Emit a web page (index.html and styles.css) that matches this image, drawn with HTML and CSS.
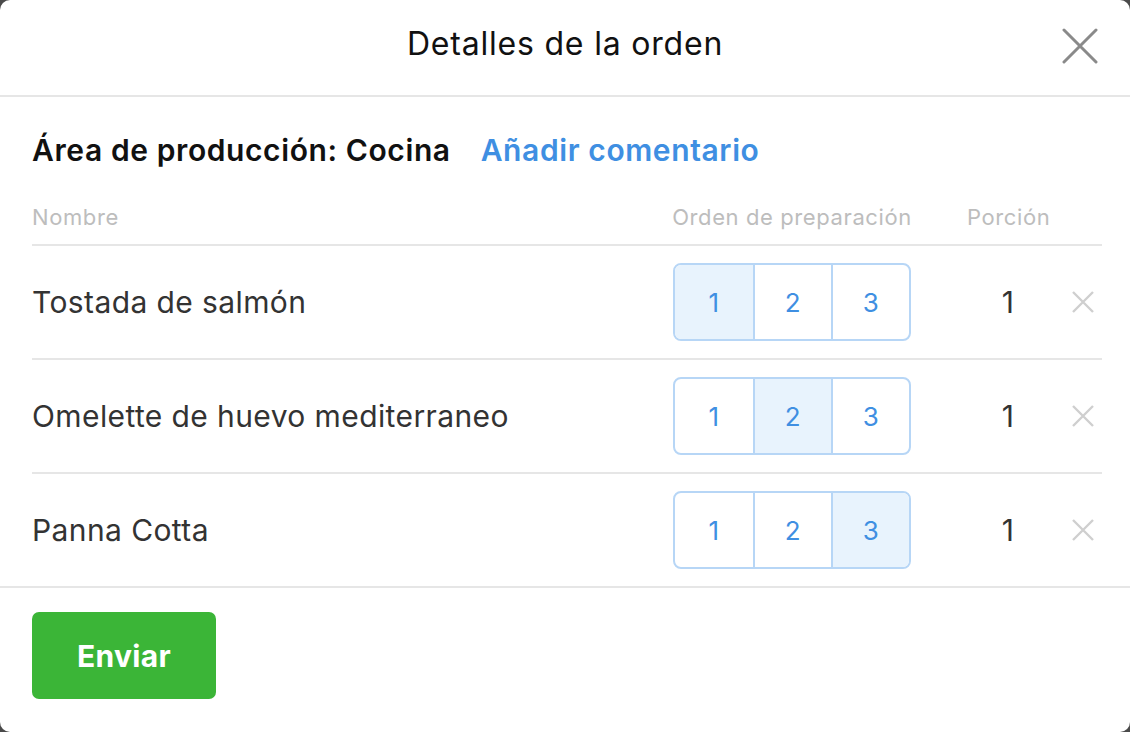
FILE: index.html
```html
<!DOCTYPE html>
<html lang="es">
<head>
<meta charset="utf-8">
<title>Detalles de la orden</title>
<link rel="stylesheet" href="styles.css">
</head>
<body>
<div class="modal">
  <header class="modal-header">
    <h1 class="modal-title">Detalles de la orden</h1>
    <button class="close-btn" aria-label="Cerrar">
      <svg width="36" height="36" viewBox="0 0 36 36"><path d="M2 2 L34 34 M34 2 L2 34" stroke="#8a8a8a" stroke-width="3" stroke-linecap="round"/></svg>
    </button>
  </header>
  <main class="modal-body">
    <div class="section-title">
      <span class="area">Área de producción: Cocina</span>
      <a class="comment-link" href="#">Añadir comentario</a>
    </div>
    <div class="table">
      <div class="row head">
        <div class="c-name">Nombre</div>
        <div class="c-order">Orden de preparación</div>
        <div class="c-portion">Porción</div>
        <div class="c-action"></div>
      </div>
      <div class="row item">
        <div class="c-name">Tostada de salmón</div>
        <div class="c-order"><div class="seg"><span class="on">1</span><span>2</span><span>3</span></div></div>
        <div class="c-portion">1</div>
        <div class="c-action"><svg class="del" width="22" height="22" viewBox="0 0 22 22"><path d="M1 1 L21 21 M21 1 L1 21" stroke="#cfcfcf" stroke-width="2.4"/></svg></div>
      </div>
      <div class="row item">
        <div class="c-name">Omelette de huevo mediterraneo</div>
        <div class="c-order"><div class="seg"><span>1</span><span class="on">2</span><span>3</span></div></div>
        <div class="c-portion">1</div>
        <div class="c-action"><svg class="del" width="22" height="22" viewBox="0 0 22 22"><path d="M1 1 L21 21 M21 1 L1 21" stroke="#cfcfcf" stroke-width="2.4"/></svg></div>
      </div>
      <div class="row item last">
        <div class="c-name">Panna Cotta</div>
        <div class="c-order"><div class="seg"><span>1</span><span>2</span><span class="on">3</span></div></div>
        <div class="c-portion">1</div>
        <div class="c-action"><svg class="del" width="22" height="22" viewBox="0 0 22 22"><path d="M1 1 L21 21 M21 1 L1 21" stroke="#cfcfcf" stroke-width="2.4"/></svg></div>
      </div>
    </div>
  </main>
  <footer class="modal-footer">
    <button class="send-btn">Enviar</button>
  </footer>
</div>
</body>
</html>
```

FILE: styles.css
```css
* { box-sizing: border-box; }
html, body { margin: 0; padding: 0; }
body {
  background: #4a4a4a;
  font-family: Inter, "Noto Sans", sans-serif;
  width: 1130px;
  height: 732px;
  overflow: hidden;
}
.modal {
  width: 1130px;
  height: 732px;
  background: #fff;
  border-radius: 10px;
  display: flex;
  flex-direction: column;
}
.modal-header {
  height: 97px;
  border-bottom: 2px solid #e6e6e6;
  display: flex;
  align-items: center;
  justify-content: center;
  position: relative;
  padding-bottom: 8px;
}
.modal-title {
  margin: 0;
  font-size: 32px;
  font-weight: 400;
  color: #111;
  letter-spacing: 0.8px;
}
.close-btn {
  position: absolute;
  right: 32px;
  top: 28px;
  background: none;
  border: 0;
  padding: 0;
  width: 36px;
  height: 36px;
  display: flex;
}
.modal-body {
  flex: 1;
  padding: 0 28px 0 32px;
}
.section-title {
  height: 83px;
  padding-top: 23px;
  padding-left: 0;
  display: flex;
  align-items: center;
  gap: 30px;
  font-size: 30px;
  font-weight: 600;
  letter-spacing: 0.6px;
}
.area { color: #111; }
.comment-link { color: #3f8fe2; text-decoration: none; }
.row {
  display: flex;
  align-items: center;
  border-bottom: 2px solid #e6e6e6;
}
.row.head {
  height: 66px;
  align-items: flex-end;
  padding-bottom: 14px;
  font-size: 22px;
  line-height: 26px;
  letter-spacing: 0.6px;
  color: #bdbdbd;
  white-space: nowrap;
}
.row.item {
  height: 114px;
  font-size: 30px;
  letter-spacing: 0.4px;
  color: #333;
}
.row.item.last { border-bottom: 0; height: 112px; }
.c-name { flex: 1; }
.c-order { width: 238px; display: flex; justify-content: center; }
.c-portion { width: 82px; margin-left: 56px; text-align: center; }
.c-action { width: 53px; display: flex; justify-content: flex-end; padding-right: 8px; }
.seg {
  display: flex;
  border: 2px solid #b7d6f6;
  border-radius: 8px;
  overflow: hidden;
  height: 78px;
}
.seg span {
  width: 78px;
  display: flex;
  align-items: center;
  justify-content: center;
  color: #3f8fe2;
  font-size: 26px;
  font-weight: 400;
}
.seg span + span { border-left: 2px solid #b7d6f6; }
.seg span.on { background: #e8f3fd; }
.del { display: block; }
.modal-footer {
  border-top: 2px solid #e6e6e6;
  padding: 24px 32px 0;
  height: 146px;
}
.send-btn {
  width: 184px;
  height: 87px;
  background: #3bb537;
  border: 0;
  border-radius: 7px;
  color: #fff;
  font-family: Inter, "Noto Sans", sans-serif;
  font-size: 30px;
  font-weight: 700;
  letter-spacing: 0.3px;
}
```
